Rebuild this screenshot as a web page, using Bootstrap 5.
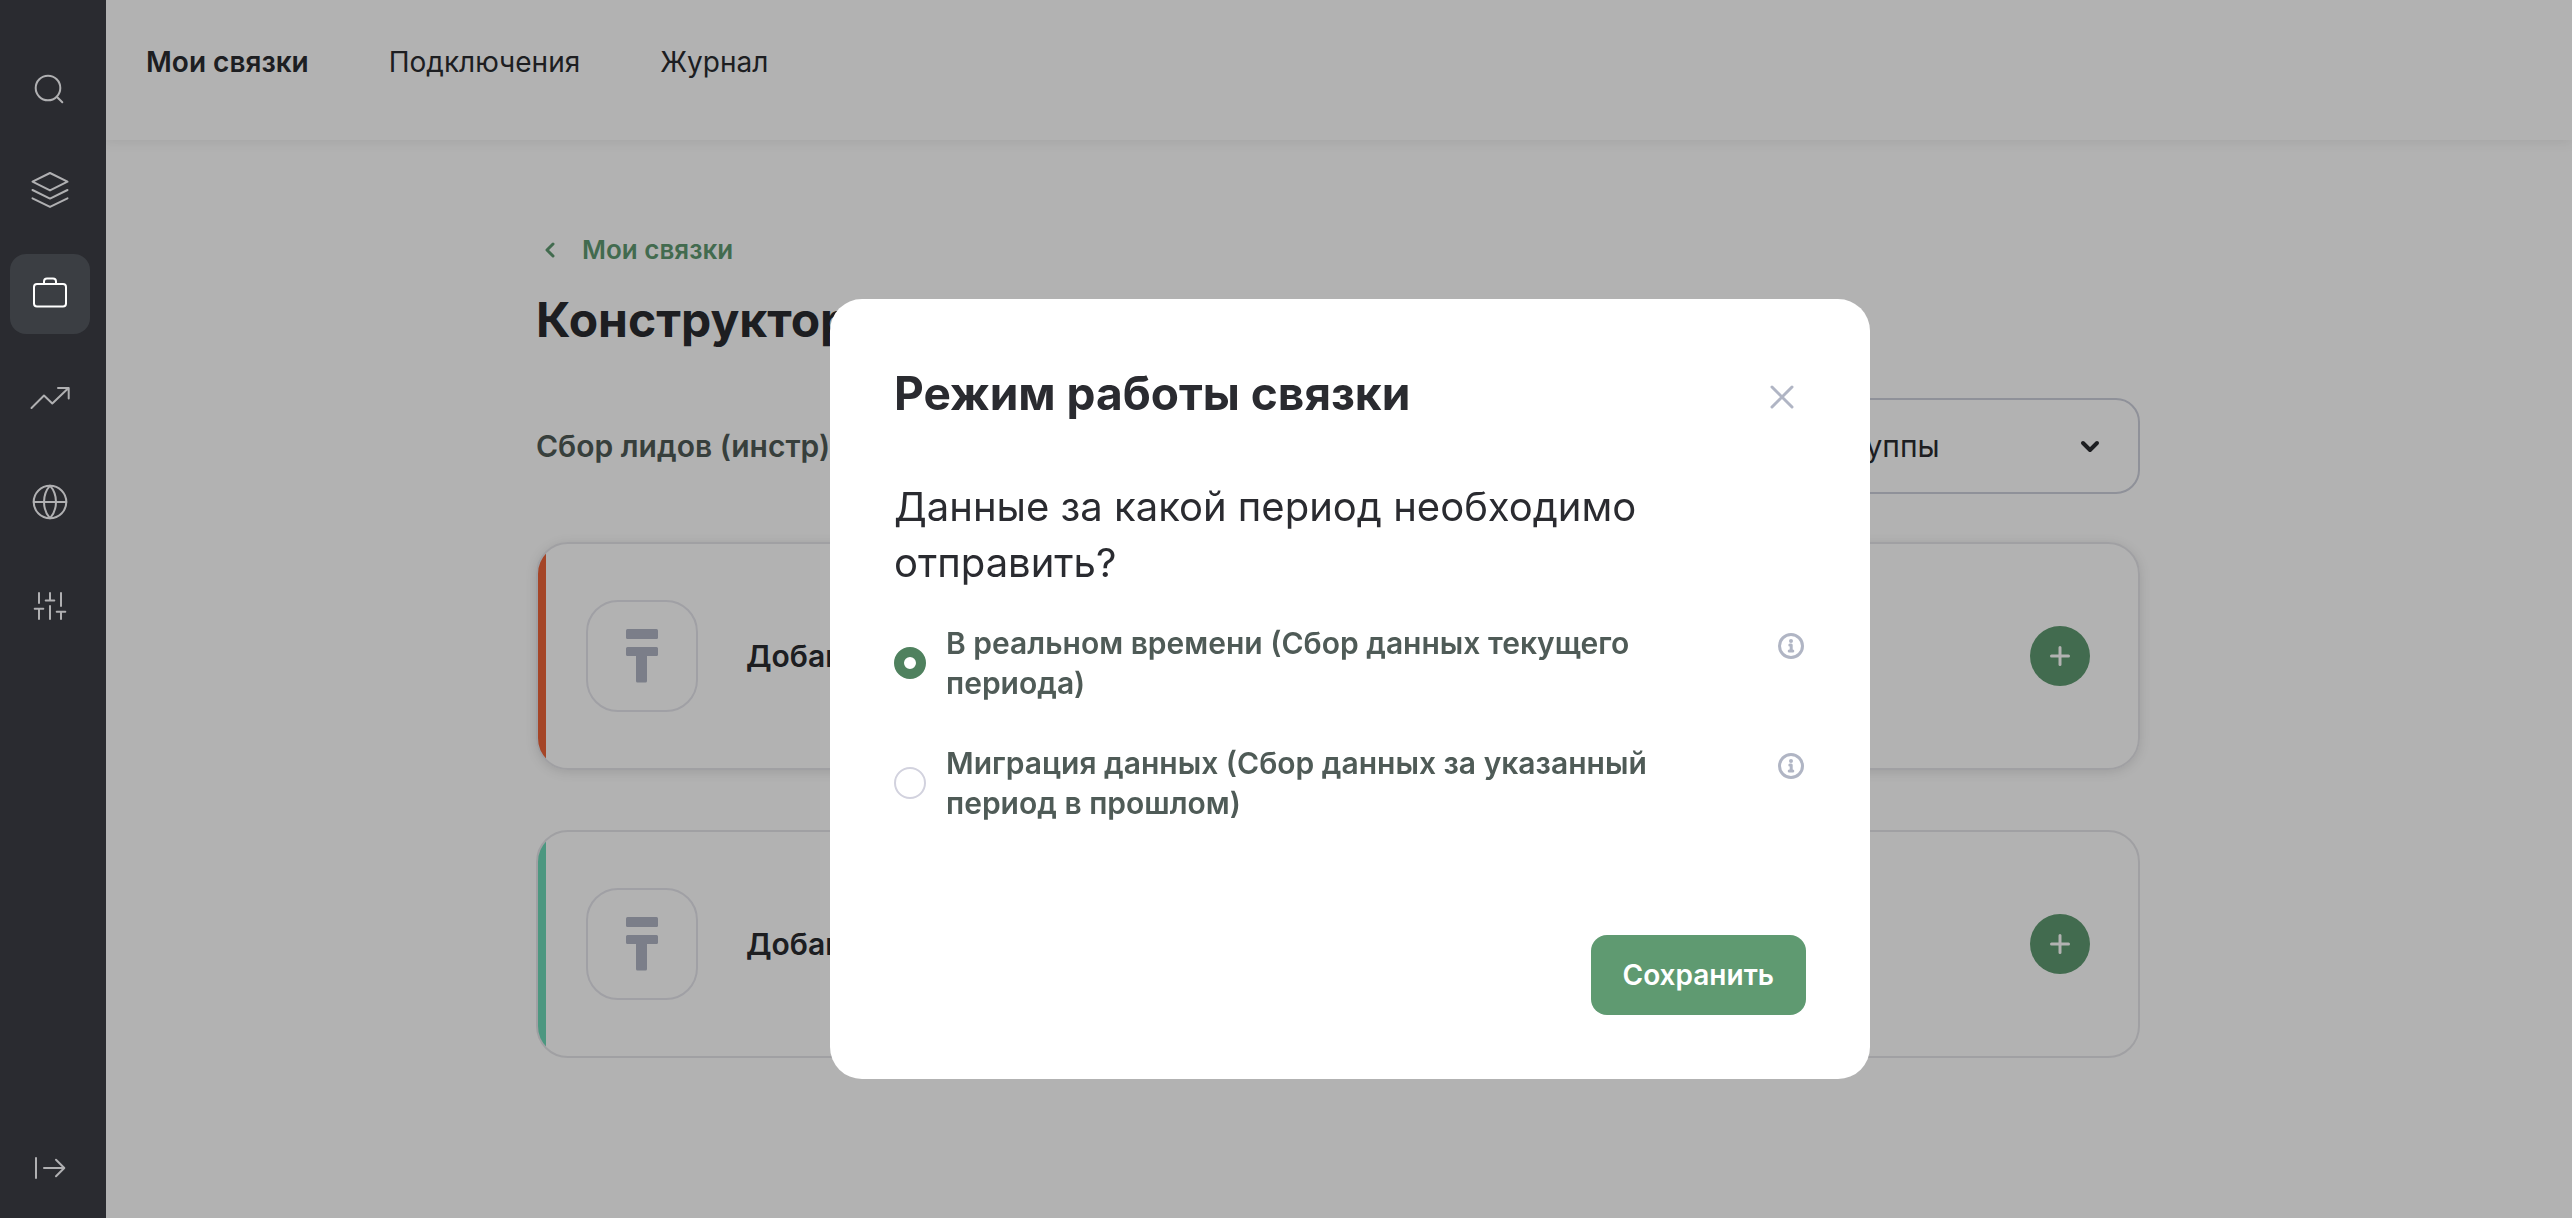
<!DOCTYPE html>
<html lang="ru">
<head>
<meta charset="utf-8">
<meta name="viewport" content="width=device-width, initial-scale=1">
<title>Режим работы связки</title>
<link rel="stylesheet" href="https://cdn.jsdelivr.net/npm/bootstrap@5.3.0/dist/css/bootstrap.min.css">
<style>
  :root {
    --ink: #2a2b30;
    --ink-soft: #4f5b57;
    --green: #5f9a71;
    --line: #e6e6ea;
    --muted: #b0b5c4;
  }
  body { font-family: Inter, "Noto Sans", sans-serif; font-size: 28px; line-height: 40px; color: var(--ink); background: #fff; }
  svg { display: block; flex: none; fill: none; stroke: currentColor; stroke-width: 2; stroke-linecap: round; stroke-linejoin: round; }

  /* side rail */
  .rail { width: 106px; z-index: 1060; background: #2a2b30; padding: 46px 16px 10px 10px; }
  .rail-list { gap: 24px; }
  .rail-link { width: 80px; height: 80px; border-radius: 16px; color: #b0b0b2; }
  .rail-link.active { background: #3b3e43; color: #fff; }

  /* page */
  .shell { padding-left: 104px; }
  .topbar { height: 140px; padding: 42px; gap: 80px; box-shadow: 0 2px 12px rgba(0, 0, 0, .08); }
  .topbar a { color: var(--ink); }
  .builder { max-width: 1604px; padding-top: 90px; }
  .back-link { color: var(--green); font-size: 26px; gap: 18px; }
  .back-link svg { stroke-width: 3; }
  .page-title { font-size: 48px; line-height: 60px; font-weight: 700; margin: 20px 0 48px; }
  .flow-name { color: var(--ink-soft); font-size: 30px; }
  .group-select {
    width: 400px; height: 96px; padding: 0 80px 0 32px; font-size: 30px; color: var(--ink);
    background: transparent; border: 2px solid #cdd0dc; border-radius: 24px;
  }
  .group-arrow { right: 36px; top: 34px; pointer-events: none; stroke-width: 4; }
  .steps { gap: 60px; margin-top: 48px; }
  .step { border: 2px solid var(--line); border-radius: 32px; padding: 56px 48px; gap: 48px; overflow: hidden; }
  .step-raised { box-shadow: 0 2px 12px rgba(0, 0, 0, .12); }
  .step-source { background: linear-gradient(90deg, #ec6339 8px, #fff 8px); }
  .step-target { background: linear-gradient(90deg, #6dd9b8 8px, #fff 8px); }
  .step-logo { width: 112px; height: 112px; border: 2px solid #e6e6ec; border-radius: 32px; color: #b0b5c4; }
  .step-logo svg { fill: currentColor; stroke: none; }
  .step-name { font-size: 30px; }
  .add-btn { width: 60px; height: 60px; background: var(--green); color: #fff; border: 0; }

  /* dialog */
  .modal-backdrop.show { opacity: .3; }
  .mode-modal { padding-left: 128px; }
  .mode-modal .modal-dialog { max-width: 1040px; margin: 299px auto 64px; }
  .mode-modal .modal-content { border: 0; border-radius: 32px; padding: 64px; color: var(--ink); }
  .mode-title { font-size: 46px; line-height: 60px; font-weight: 700; }
  .close-btn { width: 48px; height: 68px; color: var(--muted); }
  .mode-question { font-size: 40px; line-height: 56px; margin: 48px 0 32px; }
  .mode-list { gap: 40px; }
  .mode-option { gap: 20px; color: var(--ink-soft); font-size: 30px; }
  .mode-option .form-check-input { width: 32px; height: 32px; border: 2px solid #d2d2de; float: none; box-shadow: none; background-image: none; }
  .mode-option .form-check-input:checked { border: 10px solid #4f815e; background: #fff; }
  .info-btn { color: var(--muted); padding: 8px 0 0; margin-left: 28px; }
  .save-btn { height: 80px; padding: 0 32px; margin-top: 112px; border-radius: 16px; background: var(--green); color: #fff; font-size: 28px; }
</style>
</head>
<body>

<nav class="rail position-fixed top-0 start-0 vh-100 d-flex flex-column justify-content-between" aria-label="Разделы">
  <div class="rail-list d-flex flex-column">
    <a class="rail-link d-flex align-items-center justify-content-center" href="#" aria-label="Поиск">
      <svg width="48" height="48" viewBox="0 0 48 48"><circle cx="22" cy="26" r="12.3"/><path d="M31 35l5.300 5.300"/></svg>
    </a>
    <a class="rail-link d-flex align-items-center justify-content-center" href="#" aria-label="Слои">
      <svg width="48" height="48" viewBox="0 0 48 48"><path d="M24 7l17.500 8.700L24 24.400 6.500 15.700zM6.500 24L24 32.600 41.500 24M6.500 32.300L24 40.900l17.500-8.600"/></svg>
    </a>
    <a class="rail-link active d-flex align-items-center justify-content-center" href="#" aria-label="Связки" aria-current="page">
      <svg width="48" height="48" viewBox="0 0 48 48"><rect x="8" y="14" width="32" height="22.500" rx="3"/><path d="M18 14v-2.500a3 3 0 0 1 3-3h6a3 3 0 0 1 3 3V14"/></svg>
    </a>
    <a class="rail-link d-flex align-items-center justify-content-center" href="#" aria-label="Аналитика">
      <svg width="48" height="48" viewBox="0 0 48 48"><path d="M5.500 34L18 21.500l8.300 8L42.500 14M32 14h10.700v10.500"/></svg>
    </a>
    <a class="rail-link d-flex align-items-center justify-content-center" href="#" aria-label="Сайты">
      <svg width="48" height="48" viewBox="0 0 48 48"><circle cx="24" cy="24" r="16.300"/><path d="M7.700 24h32.600M24 7.700c-8 9-8 23.600 0 32.600M24 7.700c8 9 8 23.600 0 32.600"/></svg>
    </a>
    <a class="rail-link d-flex align-items-center justify-content-center" href="#" aria-label="Настройки">
      <svg width="48" height="48" viewBox="0 0 48 48"><path d="M13 11v10M8.700 26.700h8.600M13 26.700V37M24 11v7.500M19.700 18.500h8.600M24 24v13M35 11v13M30.700 29.700h8.600M35 29.700V37"/></svg>
    </a>
  </div>
  <a class="rail-link d-flex align-items-center justify-content-center" href="#" aria-label="Развернуть меню">
    <svg width="48" height="48" viewBox="0 0 48 48"><path d="M10 14v20M18 24h20M30 15.700l8.300 8.300-8.300 8.300"/></svg>
  </a>
</nav>

<div class="shell">
  <header class="topbar d-flex align-items-start">
    <a class="text-decoration-none fw-semibold" href="#">Мои связки</a>
    <a class="text-decoration-none" href="#">Подключения</a>
    <a class="text-decoration-none" href="#">Журнал</a>
  </header>

  <main class="builder mx-auto">
    <div class="d-flex">
      <a class="back-link d-flex align-items-center text-decoration-none fw-semibold" href="#">
        <svg width="28" height="28" viewBox="0 0 28 28"><path d="M17 8l-6 6 6 6"/></svg>
        Мои связки
      </a>
    </div>
    <h1 class="page-title">Конструктор связки</h1>

    <div class="d-flex align-items-center justify-content-between">
      <div class="flow-name fw-semibold">Сбор лидов (инстр)</div>
      <div class="position-relative">
        <select class="group-select form-select" aria-label="Группа">
          <option>Без группы</option>
        </select>
        <svg class="group-arrow position-absolute" width="28" height="28" viewBox="0 0 28 28"><path d="M7 11l7 7 7-7"/></svg>
      </div>
    </div>

    <div class="steps d-flex flex-column">
      <section class="step step-raised step-source d-flex align-items-center">
        <div class="step-logo d-flex align-items-center justify-content-center">
          <svg width="32" height="54" viewBox="0 0 32 54"><rect width="32" height="10" rx="1.500"/><path d="M1.500 18h29a1.500 1.500 0 0 1 1.500 1.500v6a1.500 1.500 0 0 1-1.500 1.500H21v25a1.500 1.500 0 0 1-1.500 1.500h-8a1.500 1.500 0 0 1-1.500-1.500V27H1.500A1.500 1.500 0 0 1 0 25.500v-6A1.500 1.500 0 0 1 1.500 18z"/></svg>
        </div>
        <div class="step-name fw-semibold me-auto">Добавить</div>
        <button class="add-btn btn rounded-circle p-0 d-flex align-items-center justify-content-center" type="button" aria-label="Добавить источник">
          <svg width="24" height="24" viewBox="0 0 24 24"><path d="M12 3.500v17M3.500 12h17" stroke-width="3"/></svg>
        </button>
      </section>
      <section class="step step-target d-flex align-items-center">
        <div class="step-logo d-flex align-items-center justify-content-center">
          <svg width="32" height="54" viewBox="0 0 32 54"><rect width="32" height="10" rx="1.500"/><path d="M1.500 18h29a1.500 1.500 0 0 1 1.500 1.500v6a1.500 1.500 0 0 1-1.500 1.500H21v25a1.500 1.500 0 0 1-1.500 1.500h-8a1.500 1.500 0 0 1-1.500-1.500V27H1.500A1.500 1.500 0 0 1 0 25.500v-6A1.500 1.500 0 0 1 1.500 18z"/></svg>
        </div>
        <div class="step-name fw-semibold me-auto">Добавить</div>
        <button class="add-btn btn rounded-circle p-0 d-flex align-items-center justify-content-center" type="button" aria-label="Добавить приёмник">
          <svg width="24" height="24" viewBox="0 0 24 24"><path d="M12 3.500v17M3.500 12h17" stroke-width="3"/></svg>
        </button>
      </section>
    </div>
  </main>
</div>

<div class="modal-backdrop show"></div>
<div class="mode-modal modal d-block" role="dialog" aria-modal="true" aria-labelledby="modeTitle">
  <div class="modal-dialog">
    <form class="modal-content">
      <div class="d-flex align-items-start justify-content-between">
        <h2 class="mode-title mb-0" id="modeTitle">Режим работы связки</h2>
        <button class="close-btn btn border-0 p-0 d-flex align-items-center justify-content-center" type="button" aria-label="Закрыть">
          <svg width="28" height="28" viewBox="0 0 28 28"><path d="M4 4l20 20M24 4L4 24" stroke-width="3"/></svg>
        </button>
      </div>
      <p class="mode-question">Данные за какой период необходимо отправить?</p>
      <div class="mode-list d-flex flex-column">
        <div class="mode-option d-flex align-items-center">
          <input class="form-check-input m-0 flex-shrink-0" type="radio" name="mode" id="modeLive" checked>
          <label class="fw-semibold flex-grow-1" for="modeLive">В реальном времени (Сбор данных текущего периода)</label>
          <button class="info-btn btn border-0 align-self-start" type="button" aria-label="О сборе в реальном времени">
            <svg width="30" height="30" viewBox="0 0 30 30"><g stroke-width="3"><circle cx="15" cy="15" r="11.500"/><path d="M13.800 14h1.400v5.500M13.200 20h3.600"/><path d="M15 10h0" stroke-width="4"/></g></svg>
          </button>
        </div>
        <div class="mode-option d-flex align-items-center">
          <input class="form-check-input m-0 flex-shrink-0" type="radio" name="mode" id="modePast">
          <label class="fw-semibold flex-grow-1" for="modePast">Миграция данных (Сбор данных за указанный период в прошлом)</label>
          <button class="info-btn btn border-0 align-self-start" type="button" aria-label="О миграции данных">
            <svg width="30" height="30" viewBox="0 0 30 30"><g stroke-width="3"><circle cx="15" cy="15" r="11.500"/><path d="M13.800 14h1.400v5.500M13.200 20h3.600"/><path d="M15 10h0" stroke-width="4"/></g></svg>
          </button>
        </div>
      </div>
      <button class="save-btn btn border-0 fw-semibold align-self-end" type="submit">Сохранить</button>
    </form>
  </div>
</div>

<script src="https://cdn.jsdelivr.net/npm/bootstrap@5.3.0/dist/js/bootstrap.bundle.min.js"></script>
</body>
</html>
